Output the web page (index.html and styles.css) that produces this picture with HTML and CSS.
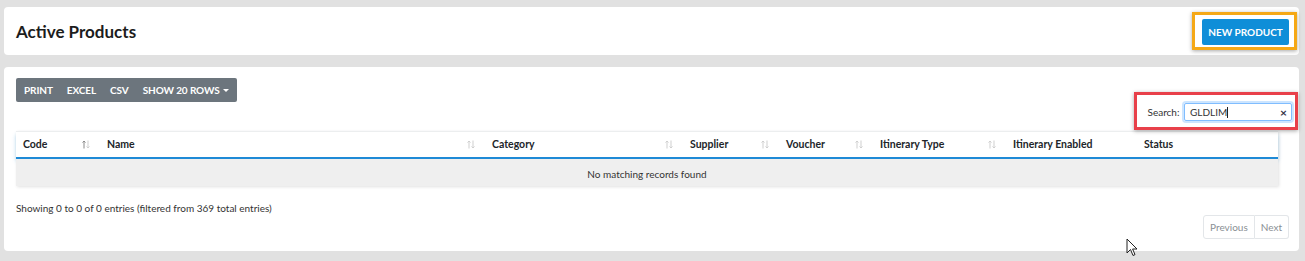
FILE: index.html
```html
<!DOCTYPE html>
<html lang="en">
<head>
  <meta charset="UTF-8" />
  <meta name="viewport" content="width=device-width, initial-scale=1.0" />
  <title>Active Products</title>
  <link rel="stylesheet" href="styles.css">
</head>
<body>
  <div class="page">
    <div class="card header-card">
      <h1>Active Products</h1>
      <div class="highlight orange">
        <button class="btn-primary">NEW PRODUCT</button>
      </div>
    </div>

    <div class="card table-card">
      <div class="toolbar">
        <div class="btn-group">
          <button>PRINT</button>
          <button>EXCEL</button>
          <button>CSV</button>
          <button>SHOW 20 ROWS <span class="caret"></span></button>
        </div>
        <div class="highlight red">
          <label>Search: <span class="search-box">GLDLIM<span class="text-cursor"></span><span class="clear">&times;</span></span></label>
        </div>
      </div>

      <table>
        <thead>
          <tr>
            <th class="c-code">Code <svg class="sort asc" viewBox="0 0 8 9"><path class="up" d="M2 8.5V1M0.5 2.5L2 1l1.5 1.5"/><path d="M6 0.5V8M4.5 6.5L6 8l1.5-1.5"/></svg></th>
            <th class="c-name">Name <svg class="sort" viewBox="0 0 8 9"><path class="up" d="M2 8.5V1M0.5 2.5L2 1l1.5 1.5"/><path d="M6 0.5V8M4.5 6.5L6 8l1.5-1.5"/></svg></th>
            <th class="c-cat">Category <svg class="sort" viewBox="0 0 8 9"><path class="up" d="M2 8.5V1M0.5 2.5L2 1l1.5 1.5"/><path d="M6 0.5V8M4.5 6.5L6 8l1.5-1.5"/></svg></th>
            <th class="c-sup">Supplier <svg class="sort" viewBox="0 0 8 9"><path class="up" d="M2 8.5V1M0.5 2.5L2 1l1.5 1.5"/><path d="M6 0.5V8M4.5 6.5L6 8l1.5-1.5"/></svg></th>
            <th class="c-vou">Voucher <svg class="sort" viewBox="0 0 8 9"><path class="up" d="M2 8.5V1M0.5 2.5L2 1l1.5 1.5"/><path d="M6 0.5V8M4.5 6.5L6 8l1.5-1.5"/></svg></th>
            <th class="c-type">Itinerary Type <svg class="sort" viewBox="0 0 8 9"><path class="up" d="M2 8.5V1M0.5 2.5L2 1l1.5 1.5"/><path d="M6 0.5V8M4.5 6.5L6 8l1.5-1.5"/></svg></th>
            <th class="c-en">Itinerary Enabled</th>
            <th class="c-status">Status</th>
          </tr>
        </thead>
        <tbody>
          <tr>
            <td colspan="8" class="empty">No matching records found</td>
          </tr>
        </tbody>
      </table>

      <div class="info">Showing 0 to 0 of 0 entries (filtered from 369 total entries)</div>

      <div class="pager">
        <a>Previous</a>
        <a>Next</a>
      </div>
    </div>
  </div>

  <svg class="mouse" width="12" height="19" viewBox="0 0 12 19">
    <path d="M1 1 L1 15 L4.5 11.5 L7 17.5 L9 16.6 L6.6 11 L11 11 Z" fill="#fff" stroke="#222" stroke-width="1" stroke-linejoin="round"/>
  </svg>
</body>
</html>
```

FILE: styles.css
```css
body {
  margin: 0;
  background: #e1e1e1;
  font-family: Lato, "Noto Sans", sans-serif;
  color: #212529;
}
.page {
  padding: 7px 6px 10px 4px;
}
.card {
  background: #fff;
  border-radius: 4px;
}
.header-card {
  height: 48px;
  display: flex;
  align-items: center;
  justify-content: space-between;
  padding: 0 2px 0 12px;
}
h1 {
  margin: 0;
  font-size: 17px;
  font-weight: 700;
  color: #1c1c1c;
}
.highlight {
  border: 3px solid;
  box-shadow: 0 1px 4px rgba(0, 0, 0, 0.35);
}
.highlight.orange {
  border-color: #f5a816;
  padding: 4px 5px 2px 7px;
}
.btn-primary {
  background: #0f8ed8;
  color: #fff;
  border: none;
  border-radius: 2px;
  font-family: inherit;
  font-size: 10px;
  font-weight: 700;
  height: 26px;
  width: 87px;
  padding: 0;
}
.table-card {
  margin-top: 12px;
  height: 184px;
  padding: 0 21px 0 12px;
  position: relative;
}
.toolbar {
  display: flex;
  justify-content: space-between;
  align-items: flex-start;
  padding-top: 11px;
  margin-right: -20px;
}
.btn-group {
  display: flex;
  background: #6c757d;
  border-radius: 2px;
  height: 24px;
  padding: 0 1px;
}
.btn-group button {
  background: none;
  border: none;
  color: #fff;
  font-family: inherit;
  font-size: 10px;
  font-weight: 700;
  letter-spacing: -0.1px;
  padding: 0 7px;
}
.caret {
  display: inline-block;
  border-left: 3px solid transparent;
  border-right: 3px solid transparent;
  border-top: 3px solid #fff;
  vertical-align: 2px;
  margin-left: 1px;
}
.highlight.red {
  border-color: #e8404a;
  margin-top: 14px;
  padding: 8px 3px 6px 11px;
  font-size: 10px;
  color: #333;
}
.search-box {
  display: inline-flex;
  align-items: center;
  width: 97px;
  height: 16px;
  border: 1px solid #80bdff;
  box-shadow: 0 0 0 2px rgba(0, 123, 255, 0.2);
  border-radius: 2px;
  padding: 0 4px 0 5px;
  margin-left: 2px;
  color: #333;
}
.text-cursor {
  display: inline-block;
  width: 1px;
  height: 11px;
  background: #222;
}
.clear {
  margin-left: auto;
  font-weight: 700;
  font-size: 12px;
  color: #334;
}
table {
  width: 1262px;
  border-collapse: collapse;
  margin-top: 1px;
  box-shadow: 1px 1px 3px rgba(0, 0, 0, 0.12);
  table-layout: fixed;
}
thead tr {
  border-top: 1px solid #eceeef;
  border-bottom: 2px solid #1e8ad6;
  box-shadow: 0 3px 4px rgba(30, 138, 214, 0.3);
}
th {
  box-sizing: border-box;
  text-align: left;
  font-size: 10.5px;
  font-weight: 700;
  height: 26px;
  padding: 0 0 0 7px;
  position: relative;
}
.sort {
  position: absolute;
  right: 10px;
  top: 8px;
  width: 8px;
  height: 9px;
  fill: none;
  stroke: #cfcfcf;
  stroke-width: 1;
}
.sort.asc .up {
  stroke: #8a8a8a;
}
.c-code { width: 84px; }
.c-name { width: 385px; }
.c-cat { width: 198px; }
.c-sup { width: 96px; }
.c-vou { width: 94px; }
.c-type { width: 133px; }
.c-en { width: 131px; }
.empty {
  background: #efefef;
  text-align: center;
  font-size: 10px;
  color: #333;
  height: 24px;
  padding: 3px 0 0;
}
.info {
  font-size: 10px;
  margin-top: 16px;
  color: #333;
}
.pager {
  display: flex;
  justify-content: flex-end;
  margin-top: 1px;
  margin-right: -11px;
}
.pager a {
  font-size: 10px;
  color: #8a8f94;
  border: 1px solid #e3e6e9;
  padding: 5px 6px;
  line-height: 12px;
}
.pager a:first-child {
  border-radius: 3px 0 0 3px;
}
.pager a + a {
  border-left: none;
  border-radius: 0 3px 3px 0;
}
.mouse {
  position: absolute;
  left: 1126px;
  top: 238px;
}
```
